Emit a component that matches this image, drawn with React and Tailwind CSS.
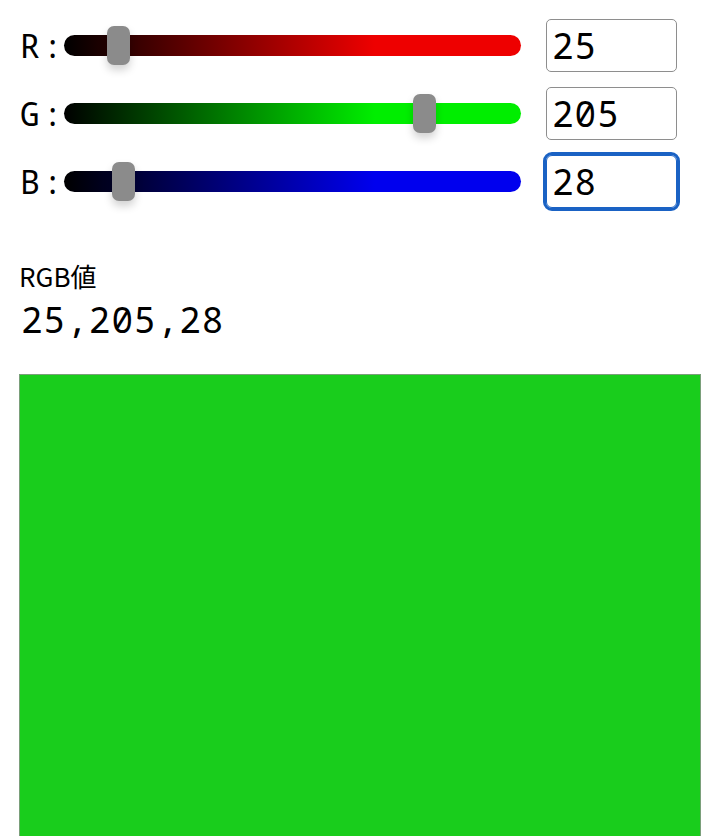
import { useState } from 'react';

const mono = "font-['Noto_Sans_Mono','Droid_Sans_Mono','DejaVu_Sans_Mono',monospace]";

const tracks = {
  R: 'bg-[linear-gradient(to_right,#000_0%,#ee0000_68%,#ee0000_100%)]',
  G: 'bg-[linear-gradient(to_right,#000_0%,#00ee00_68%,#00ee00_100%)]',
  B: 'bg-[linear-gradient(to_right,#000_0%,#0000ee_68%,#0000ee_100%)]',
};

function ChannelRow({ label, value, onChange, focused }) {
  // thumb travels the track minus its own width (457 - 23)
  const left = (value / 255) * 434;

  return (
    <div className="flex items-center h-[53px]">
      <span className={`w-[45px] pl-[1px] text-[33px] leading-none tracking-[3px] text-black ${mono}`}>{label}:</span>
      <div className={`relative w-[457px] h-[21px] rounded-full ${tracks[label]}`}>
        <div
          className="absolute top-[-9px] w-[23px] h-[39px] rounded-[7px] bg-[#8b8b8b] shadow-[0_5px_8px_rgba(0,0,0,0.18)]"
          style={{ left }}
        />
      </div>
      <input
        type="text"
        value={value}
        onChange={e => onChange(e.target.value)}
        className={`ml-[25px] w-[131px] h-[53px] pl-[5px] text-[36px] leading-none tracking-[1px] text-black bg-white ${mono} ${
          focused
            ? 'border border-[#1a62c4] rounded-[6px] outline-[3px] outline-solid outline-[#1a62c4]'
            : 'border border-[#8e8e8e] rounded-[5px] outline-none'
        }`}
      />
    </div>
  );
}

export default function App() {
  const [rgb, setRgb] = useState({ R: 25, G: 205, B: 28 });

  const update = key => v => {
    const n = Math.max(0, Math.min(255, parseInt(v, 10) || 0));
    setRgb(c => ({ ...c, [key]: n }));
  };

  return (
    <div className="min-h-screen bg-white px-[19px] pt-[19px] text-black">
      <div className="flex flex-col gap-[15px]">
        <ChannelRow label="R" value={rgb.R} onChange={update('R')} />
        <ChannelRow label="G" value={rgb.G} onChange={update('G')} />
        <ChannelRow label="B" value={rgb.B} onChange={update('B')} focused />
      </div>

      <div className="mt-[55px] text-[26px] leading-none font-['Noto_Sans_CJK_JP','Noto_Sans',sans-serif]">
        RGB値
      </div>
      <div className={`mt-[13px] pl-[2px] text-[36px] leading-none tracking-[1px] ${mono}`}>
        {rgb.R},{rgb.G},{rgb.B}
      </div>

      {/* preview swatch */}
      <div
        className="mt-[36px] h-[500px] w-[682px] border border-[#7a9f7a]"
        style={{ backgroundColor: `rgb(${rgb.R}, ${rgb.G}, ${rgb.B})` }}
      />
    </div>
  );
}
